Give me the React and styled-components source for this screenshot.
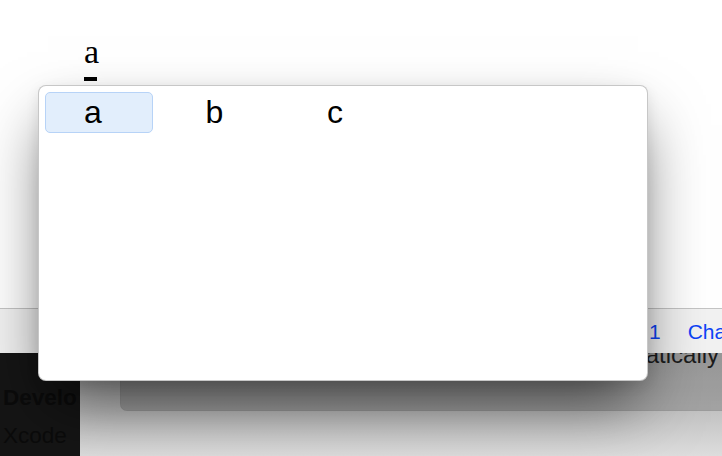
import React from "react";
import styled, { createGlobalStyle } from "styled-components";

const Global = createGlobalStyle`
  html, body { margin: 0; padding: 0; background: #ffffff; }
  body { font-family: "Liberation Sans", Arial, sans-serif; }
`;

const Screen = styled.div`
  position: relative;
  width: 722px;
  height: 456px;
  overflow: hidden;
  display: flex;
  flex-direction: column;
  background: #ffffff;
`;

const Editor = styled.div`
  height: 308px;
  flex: none;
  box-sizing: border-box;
  padding: 35px 0 0 84px;
  display: flex;
  flex-direction: column;
  align-items: flex-start;
  background: #ffffff;
`;

const Composing = styled.div`
  font-family: "Liberation Serif", "Times New Roman", serif;
  font-size: 34px;
  line-height: 34px;
  color: #000;
`;

const MarkedUnderline = styled.div`
  margin-top: 8px;
  width: 13px;
  height: 4px;
  background: #000;
`;

const Divider = styled.div`
  height: 1px;
  flex: none;
  background: #c4c4c4;
`;

const StatusBar = styled.div`
  height: 44px;
  flex: none;
  box-sizing: border-box;
  padding: 2px 0 0 649px;
  display: flex;
  gap: 27px;
  background: #f2f2f2;
  white-space: nowrap;
  overflow: hidden;
`;

const StatusLink = styled.span`
  font-size: 21px;
  line-height: 42px;
  color: #0d43f7;
`;

const Lower = styled.div`
  flex: 1;
  display: flex;
  min-height: 0;
`;

const Sidebar = styled.div`
  width: 80px;
  flex: none;
  box-sizing: border-box;
  padding: 26px 0 0 3px;
  background: #151515;
  overflow: hidden;
  white-space: nowrap;
`;

const SidebarItem = styled.div`
  font-size: 22.5px;
  line-height: 38px;
  font-weight: ${(p) => (p.$bold ? 700 : 400)};
  color: #0b0b0b;
`;

const Main = styled.div`
  flex: 1;
  padding-left: 40px;
  background: linear-gradient(
    to bottom,
    #b4b4b4 0px,
    #c2c2c2 58px,
    #dddddd 103px
  );
  overflow: hidden;
`;

const Card = styled.div`
  height: 58px;
  box-sizing: border-box;
  margin-right: -20px;
  padding-left: 458px;
  background: rgba(0, 0, 0, 0.16);
  border-left: 1px solid rgba(0, 0, 0, 0.04);
  border-bottom: 1px solid rgba(0, 0, 0, 0.04);
  border-bottom-left-radius: 7px;
  overflow: hidden;
  white-space: nowrap;
`;

const CardText = styled.div`
  margin-top: -9px;
  font-size: 24px;
  line-height: 22px;
  color: #1c1c1c;
`;

const CandidatePanel = styled.div`
  position: absolute;
  left: 38px;
  top: 85px;
  width: 610px;
  height: 296px;
  box-sizing: border-box;
  padding: 6px;
  background: #ffffff;
  border: 1px solid rgba(0, 0, 0, 0.22);
  border-radius: 8px;
  box-shadow: 0 4px 14px rgba(0, 0, 0, 0.08),
    0 30px 60px -10px rgba(0, 0, 0, 0.6);
  display: grid;
  grid-template-columns: repeat(4, 108px);
  grid-auto-rows: 41px;
  column-gap: 13.5px;
  align-content: start;
`;

const Candidate = styled.div`
  box-sizing: border-box;
  padding-left: ${(p) => (p.$selected ? 38 : 39)}px;
  font-size: 32px;
  line-height: ${(p) => (p.$selected ? 39 : 41)}px;
  color: #000;
  border-radius: 5px;
  background: ${(p) => (p.$selected ? "#e2eefc" : "transparent")};
  border: ${(p) => (p.$selected ? "1px solid #b7d3f7" : "none")};
`;

const candidates = ["a", "b", "c"];

export default function App() {
  return (
    <>
      <Global />
      <Screen>
        <Editor>
          <Composing>a</Composing>
          <MarkedUnderline />
        </Editor>
        <Divider />
        <StatusBar>
          <StatusLink>1</StatusLink>
          <StatusLink>Characters</StatusLink>
        </StatusBar>
        <Lower>
          <Sidebar>
            <SidebarItem $bold>Develo</SidebarItem>
            <SidebarItem>Xcode</SidebarItem>
          </Sidebar>
          <Main>
            <Card>
              <CardText>automatically</CardText>
            </Card>
          </Main>
        </Lower>
        <CandidatePanel>
          {candidates.map((c, i) => (
            <Candidate key={c} $selected={i === 0}>
              {c}
            </Candidate>
          ))}
        </CandidatePanel>
      </Screen>
    </>
  );
}
